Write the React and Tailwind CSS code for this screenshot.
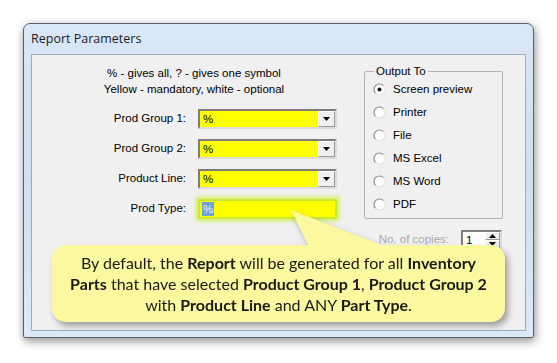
import React from "react";

const ROWS = [
  { label: "Prod Group 1:", combo: true },
  { label: "Prod Group 2:", combo: true },
  { label: "Product Line:", combo: true },
  { label: "Prod Type:", combo: false },
];

const OUTPUTS = ["Screen preview", "Printer", "File", "MS Excel", "MS Word", "PDF"];

function Radio({ checked }) {
  return (
    <svg width="13" height="13" viewBox="0 0 13 13" className="shrink-0">
      <circle cx="6.5" cy="6.5" r="5.5" fill="#ffffff" />
      <path d="M10.4 2.6 A5.5 5.5 0 0 0 2.6 10.4" stroke="#8a8a8a" strokeWidth="1.2" fill="none" />
      <path d="M2.6 10.4 A5.5 5.5 0 0 0 10.4 2.6" stroke="#e2e2e2" strokeWidth="1.2" fill="none" />
      {checked && <circle cx="6.5" cy="6.5" r="2" fill="#111111" />}
    </svg>
  );
}

function Arrow({ up }) {
  return (
    <svg width="7" height="4" viewBox="0 0 7 4">
      <polygon points={up ? "3.5,0 7,4 0,4" : "0,0 7,0 3.5,4"} fill="#000" />
    </svg>
  );
}

function Combo() {
  return (
    <div className="w-[139px] h-[20px] flex border-2 border-t-[#7c7c7c] border-l-[#7c7c7c] border-b-[#dcdcdc] border-r-[#dcdcdc] bg-[#ffff00]">
      <div className="flex-1 pl-[3px] leading-[16px]">%</div>
      <div className="w-[17px] h-[16px] flex items-center justify-center bg-[#f0f0f0] border border-t-white border-l-white border-b-[#9a9a9a] border-r-[#9a9a9a]">
        <Arrow />
      </div>
    </div>
  );
}

function TypeField() {
  return (
    <div className="w-[139px] h-[20px] flex items-center border-2 border-[#c9e63a] bg-[#ffff00] shadow-[0_0_4px_2px_rgba(200,240,40,0.75)]">
      <span className="ml-[2px] px-[1px] leading-[14px] bg-[#6aa3d8] text-[#e6f2ff]">%</span>
    </div>
  );
}

export default function App() {
  return (
    <div className="w-[557px] h-[363px] bg-white pt-[23px] pl-[23px] overflow-hidden text-[11.5px] text-black" style={{ fontFamily: '"Liberation Sans", Arial, sans-serif' }}>
      {/* window frame */}
      <div className="w-[511px] h-[315px] rounded-t-[7px] rounded-b-[2px] border border-[#55606e] bg-gradient-to-b from-[#d9e7f6] via-[#cfe0f2] to-[#dbe9f7] shadow-[1px_3px_10px_rgba(0,0,0,0.45)]">
        <div className="h-[30px] pl-[7px] flex items-center text-[12.5px] text-[#1e1e1e]" style={{ fontFamily: '"Open Sans", "Noto Sans", sans-serif' }}>
          Report Parameters
        </div>

        {/* client area */}
        <div className="relative ml-[7px] w-[495px] h-[277px] bg-[#f0f0f0] border border-[#9eabb9] flex">
          {/* left column */}
          <div className="w-[324px] flex flex-col pt-[10px]">
            <div className="text-center leading-[16px]">% - gives all, ? - gives one symbol</div>
            <div className="text-center leading-[16px]">Yellow - mandatory, white - optional</div>
            <div className="mt-[12px] flex flex-col gap-[10px]">
              {ROWS.map((r) => (
                <div key={r.label} className="flex items-center h-[20px]">
                  <div className="w-[154px] text-right">{r.label}</div>
                  <div className="ml-[12px]">{r.combo ? <Combo /> : <TypeField />}</div>
                </div>
              ))}
            </div>
          </div>

          {/* right column */}
          <div className="ml-[8px] w-[139px] flex flex-col pt-[9px]">
            <fieldset className="border border-[#b4b4b4] rounded-[2px] pl-[8px] pb-[2px]">
              <legend className="ml-[1px] px-[2px] leading-[14px]">Output To</legend>
              {OUTPUTS.map((o, i) => (
                <div key={o} className="h-[23px] flex items-center gap-[7px]">
                  <Radio checked={i === 0} />
                  <span>{o}</span>
                </div>
              ))}
            </fieldset>
            <div className="mt-[11px] flex items-center justify-end gap-[12px] pr-[1px]">
              <span className="text-[#a8a8a8]">No. of copies:</span>
              <div className="w-[41px] h-[20px] flex bg-white border-2 border-t-[#7c7c7c] border-l-[#7c7c7c] border-b-[#dcdcdc] border-r-[#dcdcdc]">
                <div className="flex-1 pl-[3px] leading-[16px]">1</div>
                <div className="w-[15px] flex flex-col">
                  <div className="h-[8px] flex items-center justify-center bg-[#f0f0f0] border border-t-white border-l-white border-b-[#9a9a9a] border-r-[#9a9a9a]"><Arrow up /></div>
                  <div className="h-[8px] flex items-center justify-center bg-[#f0f0f0] border border-t-white border-l-white border-b-[#9a9a9a] border-r-[#9a9a9a]"><Arrow /></div>
                </div>
              </div>
            </div>
          </div>

          {/* callout overlay */}
          <div className="absolute inset-0 pointer-events-none drop-shadow-[3px_4px_3px_rgba(0,0,0,0.35)]">
            <svg className="absolute left-[255px] top-[150px]" width="115" height="46" viewBox="0 0 115 46">
              <polygon points="4,5 24,46 110,46" fill="#fcf89f" />
            </svg>
            <div
              className="absolute left-[20px] top-[190px] w-[453px] h-[77px] rounded-[14px] bg-[#fcf89f] flex flex-col items-center justify-center text-[16px] leading-[21px] text-[#1a1a1a]"
              style={{ fontFamily: 'Lato, "Open Sans", sans-serif' }}
            >
              <div>By default, the <b>Report</b> will be generated for all <b>Inventory</b></div>
              <div><b>Parts</b> that have selected <b>Product Group 1</b>, <b>Product Group 2</b></div>
              <div>with <b>Product Line</b> and ANY <b>Part Type</b>.</div>
            </div>
          </div>
        </div>
      </div>
    </div>
  );
}
